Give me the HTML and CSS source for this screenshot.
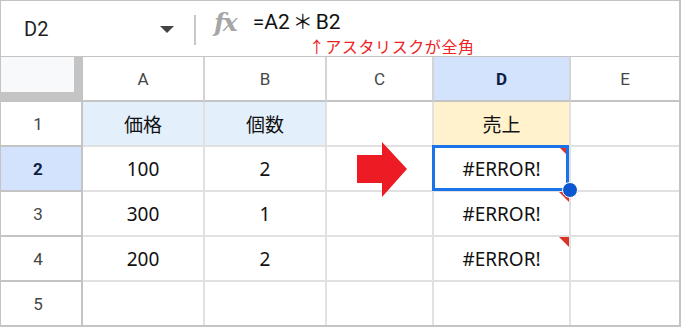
FILE: index.html
```html
<!DOCTYPE html>
<html lang="ja">
<head>
<meta charset="utf-8">
<link rel="stylesheet" href="styles.css">
</head>
<body>
<div class="sheet">
  <div class="fbar">
    <div class="namebox">
      <span class="name">D2</span>
      <span class="caret"></span>
    </div>
    <div class="divider"></div>
    <div class="fx">fx</div>
    <div class="formula">
      <div class="ftext">=A2<span class="fw">＊</span>B2</div>
      <div class="note">↑アスタリスクが全角</div>
    </div>
  </div>
  <div class="grid">
    <div class="corner"><div class="corner-in"></div></div>
    <div class="ch">A</div>
    <div class="ch">B</div>
    <div class="ch">C</div>
    <div class="ch sel">D</div>
    <div class="ch last">E</div>

    <div class="rh">1</div>
    <div class="c blue">価格</div>
    <div class="c blue">個数</div>
    <div class="c"></div>
    <div class="c yellow">売上</div>
    <div class="c last"></div>

    <div class="rh sel">2</div>
    <div class="c">100</div>
    <div class="c">2</div>
    <div class="c arrow-cell">
      <svg class="arrow" width="51" height="56" viewBox="0 0 51 56"><polygon points="0,13 25,13 25,0 50,27 25,55 25,41 0,41" fill="#ed1c24"/></svg>
    </div>
    <div class="c err">#ERROR!<span class="selbox"></span><span class="handle"></span></div>
    <div class="c last"></div>

    <div class="rh">3</div>
    <div class="c">300</div>
    <div class="c">1</div>
    <div class="c"></div>
    <div class="c err">#ERROR!</div>
    <div class="c last"></div>

    <div class="rh">4</div>
    <div class="c">200</div>
    <div class="c">2</div>
    <div class="c"></div>
    <div class="c err">#ERROR!</div>
    <div class="c last"></div>

    <div class="rh bottom">5</div>
    <div class="c bottom"></div>
    <div class="c bottom"></div>
    <div class="c bottom"></div>
    <div class="c bottom"></div>
    <div class="c bottom last"></div>
  </div>
</div>
</body>
</html>
```

FILE: styles.css
```css
* { box-sizing: border-box; }
html, body { margin: 0; padding: 0; background: #fff; }
.sheet {
  width: 681px;
  height: 327px;
  border-top: 1px solid #c4c4c4;
  border-left: 1px solid #c4c4c4;
  border-right: 2px solid #c4c4c4;
  border-bottom: 2px solid #c4c4c4;
  display: flex;
  flex-direction: column;
  font-family: "Noto Sans", "Noto Sans CJK JP", sans-serif;
}
.fbar {
  height: 56px;
  border-bottom: 1px solid #c4c4c4;
  display: flex;
  align-items: flex-start;
}
.namebox {
  width: 193px;
  height: 55px;
  display: flex;
  align-items: center;
  padding-left: 23px;
}
.name {
  font-family: Roboto, "Liberation Sans", sans-serif;
  font-size: 20px;
  color: #1f1f1f;
  flex: 1;
}
.caret {
  width: 0;
  height: 0;
  border-left: 7px solid transparent;
  border-right: 7px solid transparent;
  border-top: 7px solid #444;
  margin-right: 20px;
  margin-top: 2px;
}
.divider {
  width: 2px;
  height: 30px;
  margin-top: 14px;
  background: #c8c8c8;
}
.fx {
  margin-left: 18px;
  margin-top: 5px;
  font-family: "DejaVu Serif", serif;
  font-style: italic;
  font-weight: bold;
  font-size: 25px;
  line-height: 34px;
  color: #a6a6a6;
  letter-spacing: -2px;
}
.formula {
  margin-left: 17px;
  display: flex;
  flex-direction: column;
}
.ftext {
  font-family: Roboto, "Liberation Sans", sans-serif;
  font-size: 21px;
  color: #111;
  margin-top: 7px;
  line-height: 26px;
}
.fw {
  font-family: "Noto Sans CJK JP", sans-serif;
  font-size: 20px;
  margin: 0 3px;
}
.note {
  margin-left: 56px;
  font-family: "Noto Sans CJK JP", sans-serif;
  font-size: 16px;
  line-height: 18px;
  letter-spacing: 0.6px;
  color: #ee2222;
  margin-top: 2px;
}
.grid {
  display: grid;
  grid-template-columns: 82px 122px 122px 107px 137px 108px;
  grid-template-rows: 45px 45px 45px 45px 45px 43px;
}
.corner {
  background: #c4c4c4;
}
.corner-in {
  width: 73px;
  height: 35px;
  background: #f8f9fa;
}
.ch {
  display: flex;
  align-items: center;
  justify-content: center;
  font-family: Roboto, "Liberation Sans", sans-serif;
  font-size: 17px;
  color: #444746;
  border-right: 2px solid #d4d4d4;
  border-bottom: 2px solid #c4c4c4;
  background: #fff;
}
.ch.sel, .rh.sel {
  background: #d3e3fd;
  font-weight: bold;
  color: #0b1f44;
}
.rh {
  display: flex;
  align-items: center;
  justify-content: center;
  font-family: Roboto, "Liberation Sans", sans-serif;
  font-size: 17px;
  color: #444746;
  border-right: 2px solid #c4c4c4;
  border-bottom: 2px solid #c4c4c4;
  padding-right: 6px;
}
.c {
  position: relative;
  display: flex;
  align-items: center;
  justify-content: center;
  font-size: 19px;
  color: #111;
  border-right: 2px solid #e1e1e1;
  border-bottom: 2px solid #e1e1e1;
}
.last { border-right: none; }
.bottom { border-bottom: none; }
.blue { background: #e3effb; }
.yellow { background: #fff2cc; }
.err::after {
  content: "";
  position: absolute;
  top: 0;
  right: 0;
  width: 0;
  height: 0;
  border-top: 10px solid #dc3328;
  border-left: 10px solid transparent;
}
.selbox {
  position: absolute;
  left: -2px;
  top: -2px;
  width: 137px;
  height: 46px;
  border: 3px solid #1a73e8;
  z-index: 2;
}
.handle {
  position: absolute;
  left: 128px;
  top: 35px;
  width: 16px;
  height: 16px;
  border-radius: 50%;
  background: #0b57d0;
  border: 1px solid #fff;
  z-index: 3;
}
.arrow {
  position: absolute;
  left: 30px;
  top: -5px;
}
```
